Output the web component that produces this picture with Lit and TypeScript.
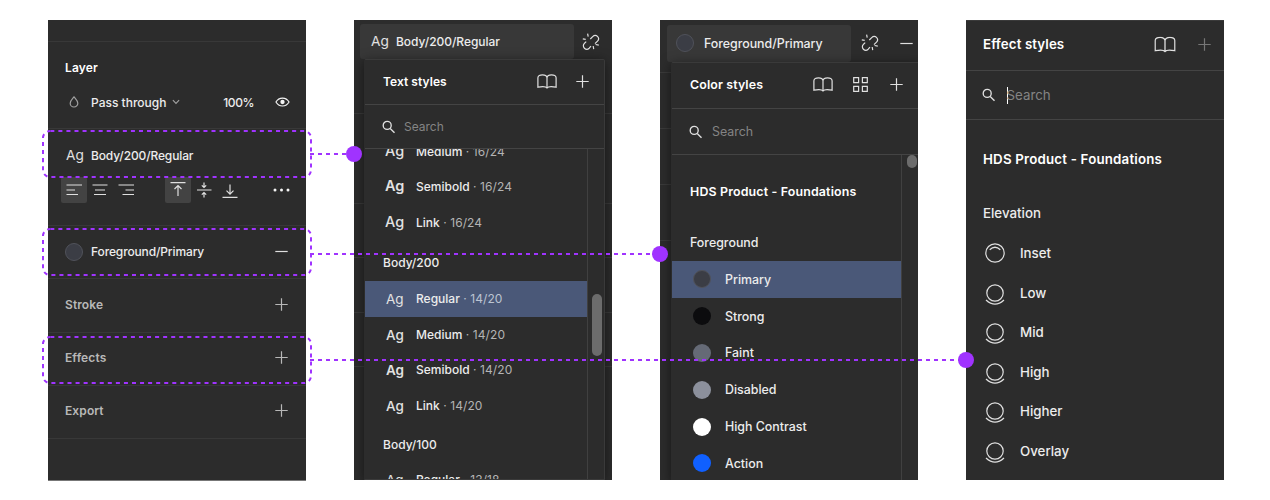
import { LitElement, html, css, svg } from "lit";
import { customElement } from "lit/decorators.js";
import { classMap } from "lit/directives/class-map.js";

const plus = html`<svg class="ico plus" width="13" height="13" viewBox="0 0 13 13"><path d="M6.5 .3v12.400M.3 6.5h12.400" /></svg>`;
const minus = html`<svg class="ico minus" width="13" height="13" viewBox="0 0 13 13"><path d="M.3 6.5h12.4" /></svg>`;
const book = html`<svg class="ico book" width="20" height="15" viewBox="0 0 20 15"><path d="M10 14V3.700C9.600 1.700 8 .9 5.500 .9S.9 1.700.9 3.800V13.200C3.500 12.700 8.800 12.300 10 14c1.200-1.700 6.500-1.300 9.100-.8V3.800C19.100 1.700 17 .9 14.500 .9S10.400 1.700 10 3.700" /></svg>`;
const search = html`<svg class="ico lens" width="14" height="14" viewBox="0 0 14 14"><circle cx="5.2" cy="5.400" r="4" /><path d="M8.200 8.400l4.300 4.300" /></svg>`;
const unlink = html`<svg class="ico" width="18" height="18" viewBox="0 0 18 18"><path d="M8.300 6l2.400-2.400c1.400-1.400 3.500-1.400 4.800-.2 1.300 1.300 1.300 3.400 0 4.800L13 10.600M4.200 8.600L2.400 10.400c-1.400 1.400-1.400 3.500 0 4.800 1.400 1.300 3.400 1.300 4.800 0L9 13.200M5.600.7l.6 3M.8 5.800l2.900.6M11.200 13l.5 3.100M13.600 11.500l3.200.6" /></svg>`;
const grid = html`<svg class="ico grid" width="15" height="15" viewBox="0 0 15 15"><path d="M.7 .7h4.900v4.900H.7zM9.400 .7h4.900v4.900h-4.900zM.7 9.400h4.900v4.900H.7zM9.400 9.400h4.900v4.900h-4.900z" /></svg>`;
const drop = html`<svg class="ico dim" width="10" height="12" viewBox="0 0 10 12"><path d="M5 .9C3.500 2.800 1.200 4.700 1.200 7.200a3.800 3.800 0 0 0 7.600 0C8.800 4.700 6.500 2.800 5 .9z" /></svg>`;
const chevron = html`<svg class="ico dim" width="8" height="6" viewBox="0 0 8 6"><path d="M.9 1.200L4 4.300l3.100-3.100" /></svg>`;
const eye = html`<svg class="ico strong" width="15" height="10" viewBox="0 0 16 10"><path d="M1 5c1.400-2.500 4-4.200 7-4.200S13.600 2.500 15 5c-1.400 2.500-4 4.200-7 4.200S2.400 7.500 1 5z" /><circle class="solid" cx="8" cy="5" r="2.300" /></svg>`;
const more = html`<svg class="ico" width="17" height="4" viewBox="0 0 17 4"><circle class="solid" cx="2" cy="2" r="1.500" /><circle class="solid" cx="8.500" cy="2" r="1.500" /><circle class="solid" cx="15" cy="2" r="1.500" /></svg>`;

const tool = (d: string, on = false) => html`<span class=${classMap({ tool: true, on })}>
  <svg class="ico" width="26" height="26" viewBox="0 0 26 26"><path d=${d} /></svg>
</span>`;

const elevation = (inset: boolean) => html`<svg class="ico elev" width="20" height="24" viewBox="0 0 20 24">
  ${inset
    ? svg`<circle cx="10" cy="12" r="9.200" /><path d="M4.700 8.800Q10 3.700 15.300 8.800" />`
    : svg`<circle cx="10" cy="12" r="8.200" /><path d="M1 19Q10 27.400 19 19" />`}
</svg>`;

@customElement("app-root")
export class AppRoot extends LitElement {
  static styles = css`
    :host { display: block; position: relative; width: 1270px; height: 500px; overflow: hidden; background: #fff;
      font-family: Inter, "Liberation Sans", sans-serif; font-weight: 450; color: #ececec; }
    * { box-sizing: border-box; }
    .board { display: flex; gap: 48px; padding: 20px 46px 0 48px; }
    .panel { width: 258px; height: 460px; background: #2c2c2c; overflow: hidden; flex: none; white-space: nowrap; }
    .stack { display: grid; }
    .stack > * { grid-area: 1 / 1; }
    .ico { fill: none; stroke: #e0e0e0; stroke-width: 1.2; display: block; flex: none; }
    .solid { fill: #f4f4f4; stroke: none; }
    .dim { stroke: #a0a0a0; }
    .strong { stroke: #f4f4f4; }
    .lens { stroke-width: 1.35; }
    .elev { stroke-width: 1.2; }
    .row { display: flex; align-items: center; }
    .grow { flex: 1; }
    .bold { font-weight: 600; color: #fff; letter-spacing: .12px; }
    .muted { font-weight: 600; color: #b8b8b8; letter-spacing: .1px; }

    .one { height: 461px; font-size: 12px; border-bottom: 1px solid #777; }
    .one .row { padding: 0 17px; border-bottom: 1px solid #383838; }
    .one .top { height: 22px; }
    .one .layer { height: 50px; border: 0; }
    .one .blend { height: 37px; padding-bottom: 16px; padding-right: 16px; }
    .one .type { height: 48px; padding-top: 4px; border: 0; }
    .one .align { height: 49px; padding: 0 16px 22px 13px; }
    .one .fill { height: 53px; padding-bottom: 1px; }
    .one .type, .one .fill { letter-spacing: -.13px; }
    .one .section { height: 53px; padding-bottom: 3px; }
    .one .section.tall { height: 54px; }
    .one .plus { stroke: #b8b8b8; margin-right: 1px; }
    .one .minus { margin-right: 1px; }
    .lead { width: 26px; flex: none; display: flex; align-items: center; }
    .lead.inset { padding-left: 4px; }
    .ag { font-size: 13.700px; font-weight: 400; letter-spacing: 0; color: #e2e2e2; padding-left: 1px; }
    .chev { margin-left: 6px; }
    .pct { margin-right: 21px; letter-spacing: -.4px; }
    .tool { width: 26px; height: 26px; border-radius: 2px; }
    .tool.on { background: #434343; }
    .tool .ico { stroke-width: 1.2; }
    .split { margin-left: 26px; }
    .dot { width: 18px; height: 18px; border-radius: 50%; flex: none; border: 1px solid transparent; }
    .slate { background: #3b3d45; border-color: #50525a; }
    .ink { background: #0c0c0e; }
    .faint { background: #656a76; }
    .disabled { background: #8c909c; }
    .white { background: #fff; }
    .action { background: #1060ff; }

    .back { display: flex; flex-direction: column; }
    .back div { border-bottom: 1px solid #3a3a3a; flex: none; }
    .b93 { height: 94px; } .b90 { height: 90px; } .b54 { height: 54px; } .b55 { height: 55px; } .b56 { height: 56px; } .b52 { height: 53px; }
    .front { display: flex; flex-direction: column; min-width: 0; min-height: 0; }
    .field { display: flex; align-items: center; }
    .chip { display: flex; align-items: center; background: #383838; border-radius: 3px; letter-spacing: -.03px; }
    .pop { background: #2c2c2c; border: 1px solid #3a3a3a; border-left-color: #2c2c2c; border-radius: 2px 2px 0 0; box-shadow: 0 2px 12px rgba(0, 0, 0, .5); display: flex; flex-direction: column; flex: none; }
    .line { border-bottom: 1px solid #444; flex: none; }
    .hint { color: #848484; font-weight: 400; }
    .body { display: flex; flex: 1; min-height: 0; overflow: hidden; }
    .list { flex: 1; min-width: 0; border-right: 1px solid #404040; }
    .item { display: flex; align-items: center; }
    .sel { background: #4a5878; }
    .meta { color: #b4b4b4; font-weight: 400; letter-spacing: .08px; }
    .sel .meta { color: #bcc4d2; }

    .two { font-size: 12px; }
    .two .field { height: 39px; padding: 4px 0 0 6px; }
    .two .chip { width: 214px; height: 35px; padding: 0 0 1px 10px; margin-right: 8px; }
    .two .pop { width: 241px; height: 421px; margin-left: 10px; }
    .two .head { height: 45px; padding: 0 15.500px 1px 18px; }
    .two .head .bold { letter-spacing: .05px; }
    .two .find { height: 44px; padding: 0 17px; gap: 8px; }
    .two .list { display: flex; flex-direction: column; }
    .two .item { height: 35.500px; flex: none; padding: 0 0 1px 20px; }
    .two .item .lead { width: 31px; font-size: 13.500px; padding-top: 1px; }
    .two .item .big { font-size: 14.500px; padding: 0 0 2px 0; }
    .two .item.first { margin-top: -15px; padding-bottom: 0; }
    .two .item.sel { height: 36px; }
    .two .group { height: 40.500px; padding: 4px 0 0 18px; flex: none; }
    .two .group.next { height: 39px; padding-top: 3px; }
    .gap20 { gap: 18.500px; }
    .bar { width: 16px; padding: 145px 0 0 4px; }
    .thumb { width: 10px; height: 62px; background: #6c6c6c; border-radius: 5px; }
    .w5 { font-weight: 500; } .w6 { font-weight: 600; }

    .three { font-size: 12.400px; }
    .three .field { height: 42px; padding: 5px 0 1px 7px; }
    .three .chip { width: 184px; height: 37px; padding-left: 9px; gap: 10px; margin-right: 10px; }
    .three .field .minus { margin-left: 20.500px; }
    .three .pop { width: 250px; height: 420px; margin-left: 11px; }
    .three .head { height: 46px; padding: 0 17px 2px 18px; }
    .three .find { height: 46px; padding: 0 17px; gap: 9px; }
    .three .list { flex: none; width: 230px; }
    .three .title { height: 73px; padding-left: 18px; letter-spacing: .16px; }
    .three .group { height: 33px; padding: 0 0 5px 18px; }
    .three .item { height: 36.800px; padding-left: 20.500px; gap: 14.500px; }
    .three .bar { padding: 0 0 0 5px; }
    .three .thumb { height: 13px; }
    .gap18 { gap: 20px; }
    .three .plus { margin-left: 2px; }

    .four { font-size: 13.300px; border-top: 1px solid #3a3a3a; }
    .four .head { height: 50px; padding: 0 13px 3px 17px; }
    .four .head .bold { letter-spacing: .1px; }
    .four .title { letter-spacing: .19px; }
    .four .head .plus { stroke: #777; }
    .four .head .book { transform: scale(1.08); }
    .four .find { height: 49px; padding: 0 16px; }
    .four .find .hint { border-left: 1.500px solid #fff; margin-left: 10.500px; line-height: 17px; text-indent: -1px; }
    .four .title { height: 80px; padding: 0 0 2px 17px; }
    .four .group { height: 28px; padding: 0 0 2px 17px; }
    .four .item { height: 39.550px; padding-left: 19px; gap: 15px; }
    .four .item.start { margin-top: 5.500px; }
    .gap27 { gap: 23px; }

    .overlay { position: absolute; left: 0; top: 0; pointer-events: none; }
    .dash { fill: none; stroke: #a033ff; stroke-width: 2; stroke-dasharray: 4 4; }
    rect.dash { stroke-dasharray: 4.030 4.030; stroke-dashoffset: -.3; }
    .node { fill: #a033ff; }
  `;

  private textItem(name: string, size: string, cls = "", weight = "") {
    return html`<div class="item ${cls}"><span class="lead ag ${weight} ${size === "16/24" ? "big" : ""}">Ag</span><span class="w5">${name}</span><span class="meta">&nbsp;· ${size}</span></div>`;
  }

  private colors: [string, string][] = [
    ["Primary", "slate"], ["Strong", "ink"], ["Faint", "faint"],
    ["Disabled", "disabled"], ["High Contrast", "white"], ["Action", "action"],
  ];

  render() {
    return html`
      <div class="board">
        <section class="panel one">
          <div class="row top"></div>
          <div class="row layer bold">Layer</div>
          <div class="row blend"><span class="lead inset">${drop}</span><span>Pass through</span><span class="chev">${chevron}</span><span class="grow"></span><span class="pct">100%</span>${eye}</div>
          <div class="row type"><span class="lead ag">Ag</span><span>Body/200/Regular</span></div>
          <div class="row align">
            ${tool("M5.500 8h15.500M5.500 13h8.500M5.500 17.500h11.500", true)}
            ${tool("M5.500 8h15M8 13h10M7 17.500h12")}
            ${tool("M5.500 8h15.500M12.500 13h8.500M9.500 17.500h11.500")}
            <span class="split"></span>
            ${tool("M5.500 5.600h15M13 19V8.500M9.500 12L13 8.500l3.500 3.500", true)}
            ${tool("M6 13h14.500M13 5.500v5M10.800 8.300l2.200 2.200L15.200 8.300M13 20.500v-5M10.800 17.700l2.200-2.200 2.200 2.200")}
            ${tool("M5.500 20.400h15M13 7.500V17M9.500 13.700L13 17.200l3.500-3.500")}
            <span class="grow"></span>${more}
          </div>
          <div class="row fill"><span class="lead"><i class="dot slate"></i></span><span>Foreground/Primary</span><span class="grow"></span>${minus}</div>
          ${["Stroke", "Effects", "Export"].map((s, i) => html`<div class=${classMap({ row: true, section: true, muted: true, tall: i === 0 })}>${s}<span class="grow"></span>${plus}</div>`)}
        </section>

        <section class="panel stack two">
          <div class="back"><div class="b93"></div><div class="b90"></div><div class="b54"></div><div class="b55"></div><div class="b54"></div></div>
          <div class="front">
            <div class="field"><div class="chip"><span class="lead ag">Ag</span><span>Body/200/Regular</span></div>${unlink}</div>
            <div class="pop">
              <div class="row line head"><span class="bold">Text styles</span><span class="grow"></span><span class="row gap20">${book}${plus}</span></div>
              <div class="row line find">${search}<span class="hint">Search</span></div>
              <div class="body">
                <div class="list">
                  ${this.textItem("Medium", "16/24", "first", "w5")}
                  ${this.textItem("Semibold", "16/24", "", "w6")}
                  ${this.textItem("Link", "16/24", "", "w5")}
                  <div class="row group">Body/200</div>
                  ${this.textItem("Regular", "14/20", "sel")}
                  ${this.textItem("Medium", "14/20", "", "w5")}
                  ${this.textItem("Semibold", "14/20", "", "w6")}
                  ${this.textItem("Link", "14/20", "", "w5")}
                  <div class="row group next">Body/100</div>
                  ${this.textItem("Regular", "13/18")}
                </div>
                <div class="bar"><div class="thumb"></div></div>
              </div>
            </div>
          </div>
        </section>

        <section class="panel stack three">
          <div class="back"><div class="b52"></div><div class="b56"></div><div class="b56"></div><div class="b56"></div></div>
          <div class="front">
            <div class="field"><div class="chip"><i class="dot slate"></i><span>Foreground/Primary</span></div>${unlink}${minus}</div>
            <div class="pop">
              <div class="row line head"><span class="bold">Color styles</span><span class="grow"></span><span class="row gap18">${book}${grid}${plus}</span></div>
              <div class="row line find">${search}<span class="hint">Search</span></div>
              <div class="body">
                <div class="list">
                  <div class="row title bold">HDS Product - Foundations</div>
                  <div class="row group">Foreground</div>
                  ${this.colors.map(([n, c], i) => html`<div class=${classMap({ item: true, sel: i === 0 })}><i class="dot ${c}"></i><span>${n}</span></div>`)}
                </div>
                <div class="bar"><div class="thumb"></div></div>
              </div>
            </div>
          </div>
        </section>

        <section class="panel four">
          <div class="row line head"><span class="bold">Effect styles</span><span class="grow"></span><span class="row gap27">${book}${plus}</span></div>
          <div class="row line find">${search}<span class="hint">Search</span></div>
          <div class="row title bold">HDS Product - Foundations</div>
          <div class="row group">Elevation</div>
          ${["Inset", "Low", "Mid", "High", "Higher", "Overlay"].map((n, i) => html`<div class=${classMap({ item: true, start: i === 0 })}>${elevation(i === 0)}<span>${n}</span></div>`)}
        </section>
      </div>

      <svg class="overlay" width="1270" height="500" viewBox="0 0 1270 500">
        <rect class="dash" x="43" y="131" width="268" height="46" rx="7" />
        <rect class="dash" x="43" y="229" width="268" height="46" rx="7" />
        <rect class="dash" x="43" y="337" width="268" height="46" rx="7" />
        <path class="dash" d="M310 154H354M310 254H660M310 360H966" />
        <circle class="node" cx="354" cy="154" r="8" />
        <circle class="node" cx="660" cy="254" r="8" />
        <circle class="node" cx="966" cy="360" r="8" />
      </svg>
    `;
  }
}
